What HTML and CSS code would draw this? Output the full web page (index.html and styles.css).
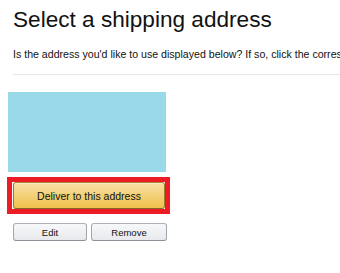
FILE: index.html
```html
<!DOCTYPE html>
<html>
<head>
<meta charset="utf-8">
<link rel="stylesheet" href="styles.css">
</head>
<body>
<div class="page">
  <h1 class="title">Select a shipping address</h1>
  <p class="intro">Is the address you'd like to use displayed below? If so, click the corresponding "Deliver to this address" button.</p>
  <div class="rule"></div>
  <div class="card">
    <div class="address"></div>
    <div class="highlight">
      <button class="deliver">Deliver to this address</button>
    </div>
    <div class="actions">
      <button class="secondary edit">Edit</button>
      <button class="secondary remove">Remove</button>
    </div>
  </div>
</div>
</body>
</html>
```
FILE: styles.css
```css
html, body {
  margin: 0;
  padding: 0;
  background: #fff;
  overflow: hidden;
}
.page {
  font-family: "Liberation Sans", Arial, sans-serif;
  padding-left: 8px;
  width: 332px;
  overflow: hidden;
}
.title {
  margin: 0;
  padding: 7px 0 0 5px;
  font-size: 22.6px;
  line-height: 26px;
  font-weight: 400;
  color: #111;
  white-space: nowrap;
}
.intro {
  margin: 15px 0 0 0;
  padding-left: 5px;
  font-size: 10.6px;
  line-height: 12px;
  color: #111;
  white-space: nowrap;
  overflow: hidden;
}
.rule {
  margin: 14px 0 0 5px;
  height: 1px;
  background: #e7e7e7;
}
.card {
  margin-top: 17px;
}
.address {
  width: 158px;
  height: 80px;
  background: #99d9ea;
}
.highlight {
  margin: 5px 0 0 -1px;
  width: 152px;
  height: 27px;
  border: 5px solid #ed1c24;
  padding: 0 0 0 1px;
  display: flex;
}
.deliver {
  flex: 1;
  margin: 0;
  padding: 0;
  border: 1px solid;
  border-color: #a88734 #9c7e31 #846a29;
  border-radius: 3px;
  background: linear-gradient(to bottom, #f7dfa5, #f0c14b);
  box-shadow: inset 0 1px 0 rgba(255,255,255,.4);
  font-family: "Liberation Sans", Arial, sans-serif;
  font-size: 10.5px;
  color: #111;
}
.actions {
  margin: 9px 0 0 5px;
  display: flex;
  gap: 4px;
}
.secondary {
  height: 18px;
  margin: 0;
  padding: 0;
  border: 1px solid;
  border-color: #adb1b8 #a2a6ac #8d9096;
  border-radius: 3px;
  background: linear-gradient(to bottom, #f7f8fa, #e7e9ec);
  font-family: "Liberation Sans", Arial, sans-serif;
  font-size: 9.5px;
  color: #111;
}
.edit { width: 74px; }
.remove { width: 76px; }
```
